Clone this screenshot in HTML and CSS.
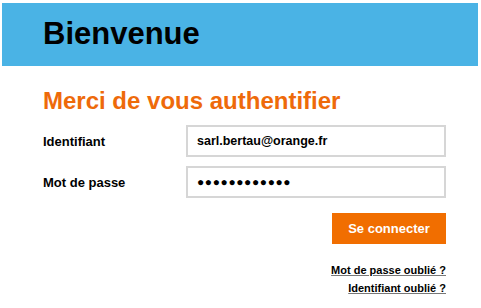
FILE: index.html
```html
<!DOCTYPE html>
<html>
<head>
<link rel="stylesheet" href="styles.css">
</head>
<body>

<div class="banner">
  <h1 class="banner-title">Bienvenue</h1>
</div>

<div class="login">
  <h2 class="login-title">Merci de vous authentifier</h2>

  <div class="field">
    <label class="field-label" for="ident">Identifiant</label>
    <div class="field-box" id="ident">sarl.bertau@orange.fr</div>
  </div>
  <div class="field">
    <label class="field-label" for="pass">Mot de passe</label>
    <div class="field-box dots" id="pass">&#9679;&#9679;&#9679;&#9679;&#9679;&#9679;&#9679;&#9679;&#9679;&#9679;&#9679;&#9679;</div>
  </div>

  <div class="actions">
    <button class="connect">Se connecter</button>
    <a class="forgot" href="#">Mot de passe oublié ?</a>
    <a class="forgot" href="#">Identifiant oublié ?</a>
  </div>
</div>

</body>
</html>
```

FILE: styles.css
```css
/* page base */
body {
  margin: 0;
  background: #ffffff;
  font-family: "Liberation Sans", Arial, sans-serif;
  color: #000000;
}

/* blue header strip */
.banner {
  margin: 3px 3px 0 2px;
  height: 63px;
  background-color: #4ab3e5;
  display: flex;
  align-items: center;
  padding-left: 41px;
}
.banner-title {
  margin: 0;
  font-size: 31px;
  font-weight: bold;
  line-height: 1;
  padding-bottom: 2px;
}

/* login block */
.login {
  width: 403px;
  padding-left: 43px;
}
.login-title {
  margin: 23px 0 12px 0;
  font-size: 24px;
  line-height: 24px;
  font-weight: bold;
  color: #ee6a0a;
}

.field {
  display: flex;
  align-items: center;
  margin-bottom: 9px;
}
.field-label {
  width: 143px;
  font-size: 13px;
  font-weight: bold;
}
.field-box {
  box-sizing: border-box;
  width: 260px;
  height: 32px;
  border: 2px solid #d6d6d6;
  padding-left: 9px;
  font-size: 12.5px;
  font-weight: bold;
  line-height: 28px;
}
.dots {
  font-size: 12px;
  letter-spacing: 0.6px;
}

.actions {
  display: flex;
  flex-direction: column;
  align-items: flex-end;
}
.connect {
  margin-top: 6px;
  width: 114px;
  height: 31px;
  border: none;
  padding: 0;
  background-color: #f16e00;
  color: #ffffff;
  font-family: "Liberation Sans", Arial, sans-serif;
  font-size: 13px;
  font-weight: bold;
}
.forgot {
  color: #000000;
  font-size: 11px;
  font-weight: bold;
  text-decoration: underline;
  text-decoration-color: #777777;
  line-height: 18px;
}
.connect + .forgot {
  margin-top: 17px;
}
```
